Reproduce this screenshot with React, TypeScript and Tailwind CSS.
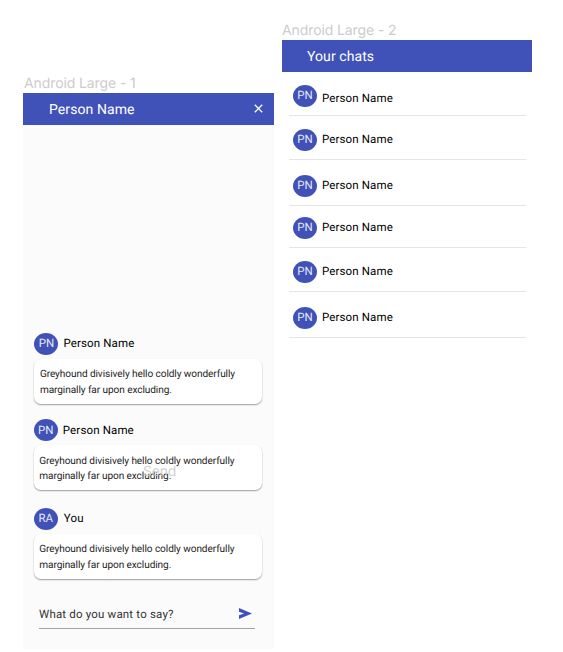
type AvatarProps = { initials: string };

function Avatar({ initials }: AvatarProps) {
  return (
    <div className="flex h-[22px] w-6 shrink-0 items-center justify-center rounded-[50%] bg-[#4052b8] pt-px text-[11.5px] leading-none text-[#e6e8f5]">
      {initials}
    </div>
  );
}

type MessageProps = { initials: string; name: string; className: string; nameClass: string };

function Message({ initials, name, className, nameClass }: MessageProps) {
  return (
    <article className={className}>
      <div className="flex h-[22px] items-center">
        <Avatar initials={initials} />
        <span className={`text-[11.5px] leading-4 tracking-[0.14px] text-black ${nameClass}`}>{name}</span>
      </div>
      <p className="mt-1 h-[45px] w-[228px] rounded-[7px] bg-white pt-[8.5px] pl-[5.5px] text-[10.1px] leading-[15.5px] tracking-[-0.09px] whitespace-nowrap text-[#252525] shadow-[0_1px_1.5px_rgba(0,0,0,0.38)]">
        Greyhound divisively hello coldly wonderfully
        <br />
        marginally far upon excluding.
      </p>
    </article>
  );
}

const chats = [
  { row: "h-[44px] pt-[13px]", name: "mt-[2px]" },
  { row: "h-[44px] pt-[13px]", name: "-mt-px" },
  { row: "h-[46px] pt-[15px]", name: "-mt-px" },
  { row: "h-[42px] pt-[11px]", name: "-mt-px" },
  { row: "h-[44px] pt-[13px]", name: "-mt-px" },
  { row: "h-[46px] pt-[15px]", name: "-mt-px" },
];

export default function App() {
  return (
    <main className="flex h-[652px] w-[563px] items-start overflow-hidden bg-white pl-[23px] font-[Roboto,sans-serif] [text-rendering:geometricPrecision]">
      <section className="w-[251px] pt-[73px]">
        <h2 className="h-5 pl-px font-[Inter,sans-serif] text-[14px] leading-[21px] tracking-[-0.1px] text-[#cccccc]">
          Android Large - 1
        </h2>
        <div className="relative h-[556px] bg-[#fbfbfb]">
          <header className="flex h-[31.5px] items-center justify-between bg-[#4052b8] pr-[11px] pl-[26px] text-white">
            <h1 className="pt-[2px] text-[14px] leading-5 tracking-[0.08px]">Person Name</h1>
            <svg className="size-[9px]" viewBox="0 0 9 9" fill="none" stroke="currentColor" strokeWidth="1.25">
              <path d="M.8.8l7.4 7.4M8.2.8.8 8.2" />
            </svg>
          </header>
          <Message initials="PN" name="Person Name" className="mt-[208px] ml-[11.4px]" nameClass="-mt-px ml-[5px]" />
          <Message initials="PN" name="Person Name" className="mt-[15.5px] ml-[10.8px]" nameClass="ml-[5px]" />
          <Message initials="RA" name="You" className="mt-[17.5px] ml-[10.8px]" nameClass="-mt-px ml-[6px]" />
          <div className="mt-[21px] ml-4 flex h-[29px] w-[216px] items-center justify-between border-b border-[#a2a2a2] pr-[3px] text-[#333333]">
            <span className="text-[11.5px] leading-4 tracking-[0.18px]">What do you want to say?</span>
            <svg className="-mt-px h-[11px] w-[13px]" viewBox="0 0 13 11" fill="#4052b8">
              <path d="M0 0 13 5.5 0 11V7.3L5 5.5 0 3.7Z" />
            </svg>
          </div>
          <span className="absolute top-[369px] left-[120px] font-[Inter,sans-serif] text-[14px] leading-5 tracking-[-0.2px] text-[#c4c4c4]/80">
            Send
          </span>
        </div>
      </section>
      <section className="ml-2 w-[250px] pt-5">
        <h2 className="h-5 font-[Inter,sans-serif] text-[14px] leading-[21px] tracking-[-0.1px] text-[#cccccc]">
          Android Large - 2
        </h2>
        <header className="flex h-[31.5px] items-center bg-[#4052b8] pl-[25px] text-white">
          <h1 className="pt-[2px] text-[14px] leading-5 tracking-[0.08px]">Your chats</h1>
        </header>
        <ul className="ml-[7.4px] w-[236.5px]">
          {chats.map((chat, i) => (
            <li key={i} className={`flex items-start border-b border-[#e5e5e5] pl-[3.5px] ${chat.row}`}>
              <Avatar initials="PN" />
              <div className={`ml-[5px] flex h-[22px] items-center ${chat.name}`}>
                <span className="text-[11.5px] leading-4 tracking-[0.14px] text-black">Person Name</span>
              </div>
            </li>
          ))}
        </ul>
      </section>
    </main>
  );
}
